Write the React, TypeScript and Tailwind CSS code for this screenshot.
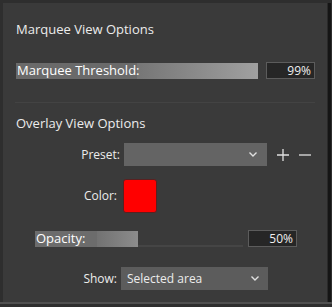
import React from "react";

const font = { fontFamily: '"Open Sans", "Noto Sans", sans-serif' };

function Chevron() {
  return (
    <svg width="10" height="7" viewBox="0 0 10 7" className="shrink-0">
      <path d="M1.5 1.5 L5 5 L8.5 1.5" fill="none" stroke="#e0e0e0" strokeWidth="1.4" />
    </svg>
  );
}

function ValueBox({ value }: { value: string }) {
  return (
    <div className="flex h-[17px] w-[49px] items-center justify-end border border-[#5c5c5c] bg-[#262626] pr-[3px] text-[12px] leading-none text-[#f0f0f0]">
      {value}
    </div>
  );
}

export default function App() {
  return (
    <div className="flex h-[307px] w-[332px] flex-col bg-[#2e2e2e]" style={font}>
      <div className="flex h-[302px] flex-row pt-[3px]">
        <div className="ml-[3px] flex h-[299px] w-[325px] flex-col border-r border-[#2a2a2a] bg-[#3a3a3a] text-[#ececec]">
          {/* Marquee section */}
          <div className="mt-[17px] pl-[13px] text-[13px] leading-[18px]">Marquee View Options</div>
          <div className="mt-[24px] flex flex-row items-center pl-[13px]">
            <div className="relative flex h-[16px] w-[242px] items-center bg-gradient-to-r from-[#6a6a6a] from-50% via-[#767676] to-[#a0a0a0] text-[13px] leading-none text-white">
              <span className="pl-[1px]">Marquee Threshold:</span>
            </div>
            <div className="ml-[8px]">
              <ValueBox value="99%" />
            </div>
          </div>
          <div className="mx-[12px] mt-[23px] h-px bg-[#434343]" />

          {/* Overlay section */}
          <div className="mt-[11px] pl-[13px] text-[13px] leading-[18px]">Overlay View Options</div>
          <div className="mt-[11px] flex h-[23px] flex-row items-center">
            <span className="w-[119px] pr-[2px] text-right text-[12px]">Preset:</span>
            <div className="ml-[2px] flex h-[23px] w-[143px] items-center justify-end bg-[#646464] pr-[9px]">
              <Chevron />
            </div>
            <svg width="12" height="12" viewBox="0 0 12 12" className="ml-[10px]">
              <path d="M6 0 V12 M0 6 H12" stroke="#e0e0e0" strokeWidth="1.3" />
            </svg>
            <svg width="12" height="12" viewBox="0 0 12 12" className="ml-[10px]">
              <path d="M0 6 H12" stroke="#e0e0e0" strokeWidth="1.3" />
            </svg>
          </div>
          <div className="mt-[13px] flex h-[34px] flex-row items-center">
            <span className="w-[117px] pr-[3px] text-right text-[12px]">Color:</span>
            <div className="ml-[3px] h-[34px] w-[34px] rounded-[3px] border border-[#5a2020] bg-[#ff0000]" />
          </div>
          <div className="mt-[17px] flex h-[17px] flex-row items-center pl-[32px]">
            <div className="relative flex h-[16px] w-[208px] flex-row items-end">
              <div className="flex h-[16px] w-[103px] items-center bg-gradient-to-r from-[#6c6c6c] from-60% via-[#727272] to-[#8c8c8c] text-[13px] leading-none text-white">
                <span className="pl-[1px]">Opacity:</span>
              </div>
              <div className="h-[2px] flex-1 bg-[#454545]" />
            </div>
            <div className="ml-[5px]">
              <ValueBox value="50%" />
            </div>
          </div>
          <div className="mt-[20px] flex h-[23px] flex-row items-center">
            <span className="w-[116px] pr-[2px] text-right text-[12px]">Show:</span>
            <div className="ml-[2px] flex h-[23px] w-[147px] items-center justify-between bg-[#5c5c5c] pl-[6px] pr-[8px] text-[12px]">
              <span>Selected area</span>
              <Chevron />
            </div>
          </div>
        </div>
        <div className="h-full w-[3px] bg-[#151515]" />
      </div>
      <div className="h-[2px] bg-[#505050]" />
    </div>
  );
}
